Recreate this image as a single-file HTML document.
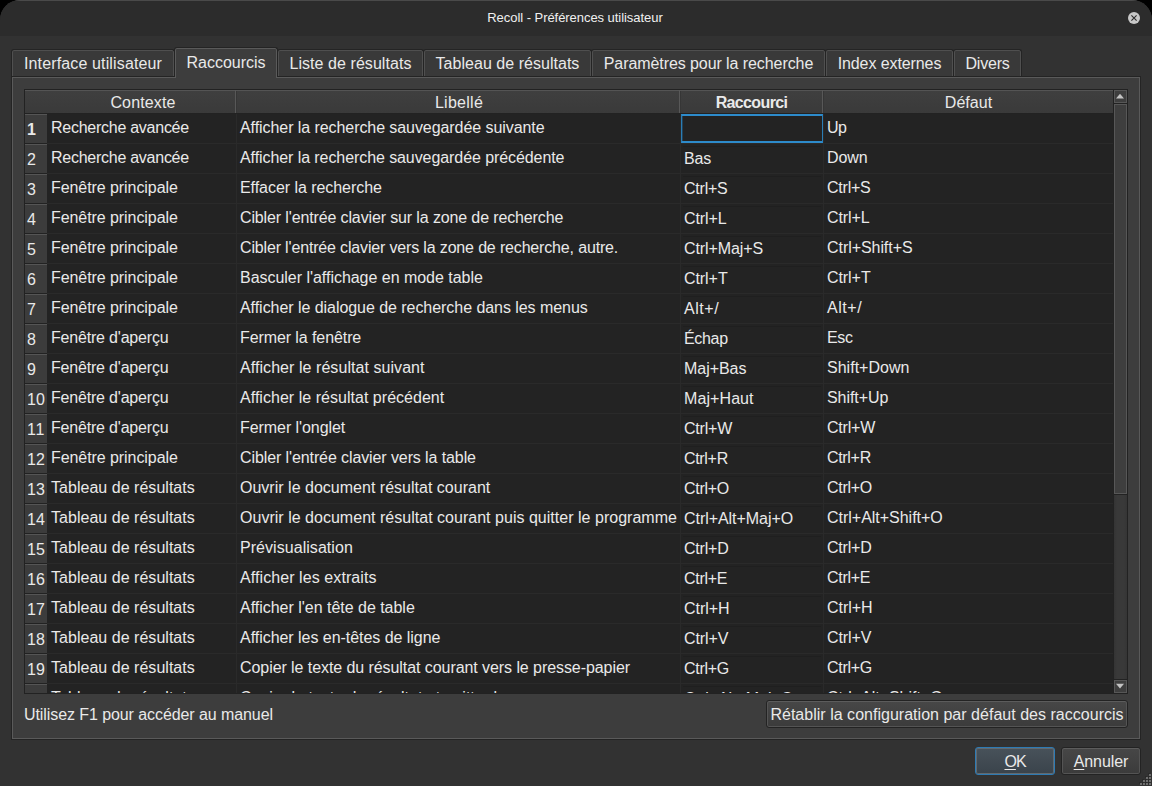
<!DOCTYPE html>
<html lang="fr"><head><meta charset="utf-8"><title>Recoll - Préférences utilisateur</title>
<style>
html,body{margin:0;padding:0;background:#000;}
body{width:1152px;height:786px;overflow:hidden;position:relative;font-family:"Liberation Sans",sans-serif;font-size:16px;color:#e9e9e9;}
*{box-sizing:border-box;}
.abs{position:absolute;white-space:pre;}
.win{position:absolute;left:0;top:0;width:1152px;height:786px;background:#323232;border-radius:20px 20px 0 0;overflow:hidden;}
.titlebar{position:absolute;left:0;top:0;width:1152px;height:36px;background:#2c2c2c;border-top:1px solid #4a4a4a;}
.title{position:absolute;left:-1px;width:1152px;top:9px;height:18px;line-height:18px;font-size:13px;text-align:center;color:#f0f0f0;}
.close{position:absolute;left:1128px;top:12px;width:12px;height:12px;}
.tab{position:absolute;top:49px;height:27px;background:#393939;border:1px solid #242424;border-bottom:none;border-radius:3px 3px 0 0;box-shadow:inset 0 1px 0 #4f4f4f,inset 1px 0 0 #505050,inset -1px 0 0 #505050;text-align:center;line-height:27px;z-index:1;}
.tab.sel{top:47px;height:30px;background:#3d3d3d;box-shadow:inset 0 1px 0 #5a5a5a,inset 1px 0 0 #5a5a5a,inset -1px 0 0 #5a5a5a;line-height:30px;z-index:3;}
.pane{position:absolute;left:11px;top:76px;width:1130px;height:664px;background:#3d3d3d;border:1px solid #242424;box-shadow:inset 0 0 0 1px #5a5a5a;z-index:2;}
.table{position:absolute;left:24px;top:89px;width:1104px;height:605px;background:#232323;border:1px solid #222;overflow:hidden;z-index:4;}
.hdr{position:absolute;left:0;top:0;width:1089px;height:24px;background:linear-gradient(#3f3f3f,#3a3a3a);border-top:1px solid #545454;border-bottom:1px solid #222;}
.hsep{position:absolute;top:0;width:1px;height:23px;background:#585858;}
.hsep::after{content:"";position:absolute;left:1px;top:1px;width:1px;height:22px;background:#363636;}
.ht{position:absolute;top:2px;height:22px;line-height:22px;text-align:center;}
.rh{position:absolute;left:0;width:22px;height:30px;background:#3c3c3c;border-top:1px solid #555;border-bottom:1px solid #222;text-align:left;padding-left:2px;line-height:29px;}
.hl{position:absolute;left:22px;width:1066px;height:1px;background:#2a2a2a;}
.vl{position:absolute;top:24px;width:1px;height:580px;background:#2a2a2a;}
.c{position:absolute;height:30px;line-height:30px;white-space:pre;}
.btn{position:absolute;border:1px solid #232323;border-radius:3px;background:linear-gradient(#474747,#3b3b3b);box-shadow:inset 0 1px 0 #5c5c5c,inset 0 0 0 1px #545454;text-align:center;}
u{text-decoration:underline;text-decoration-thickness:1px;text-underline-offset:2px;}

</style></head><body>
<div class="win">
<div class="titlebar"></div>
<div class="title"><span style="letter-spacing:-0.05px;">Recoll - Préférences utilisateur</span></div>
<svg class="close" viewBox="0 0 12 12"><circle cx="6" cy="6" r="6" fill="#c8c8c8"/><path d="M3.4 3.4 L8.6 8.6 M8.6 3.4 L3.4 8.6" stroke="#2c2c2c" stroke-width="1.1" fill="none"/></svg>
<div class="pane"></div>
<div class="tab" style="left:11px;width:164px;"><span style="letter-spacing:0.14px;">Interface utilisateur</span></div>
<div class="tab sel" style="left:174px;width:104px;"><span style="letter-spacing:-0.02px;">Raccourcis</span></div>
<div class="tab" style="left:277px;width:147px;"><span style="letter-spacing:0.06px;">Liste de résultats</span></div>
<div class="tab" style="left:423px;width:169px;"><span style="letter-spacing:0.03px;">Tableau de résultats</span></div>
<div class="tab" style="left:591px;width:235px;"><span style="letter-spacing:-0.08px;">Paramètres pour la recherche</span></div>
<div class="tab" style="left:825px;width:129px;"><span style="letter-spacing:-0.09px;">Index externes</span></div>
<div class="tab" style="left:953px;width:69px;"><span style="letter-spacing:-0.2px;">Divers</span></div>
<div class="abs" style="left:175px;top:76px;width:102px;height:2px;background:#3d3d3d;border-left:1px solid #5a5a5a;border-right:1px solid #5a5a5a;z-index:3;"></div>
<div class="table">
<div class="hdr"></div>
<div class="hsep" style="left:210px"></div>
<div class="hsep" style="left:654px"></div>
<div class="hsep" style="left:797px"></div>
<div class="ht" style="left:23.5px;width:189px;font-weight:400;"><span style="letter-spacing:0.14px;">Contexte</span></div>
<div class="ht" style="left:212.0px;width:444px;font-weight:400;"><span style="letter-spacing:0.28px;">Libellé</span></div>
<div class="ht" style="left:655px;width:143px;font-weight:700;"><span style="letter-spacing:-0.63px;">Raccourci</span></div>
<div class="ht" style="left:798px;width:291px;font-weight:400;"><span style="letter-spacing:0.02px;">Défaut</span></div>
<div class="vl" style="left:211px"></div>
<div class="vl" style="left:655px"></div>
<div class="vl" style="left:798px"></div>
<div class="hl" style="top:53px"></div>
<div class="rh" style="top:24px;font-weight:700;"><span style="letter-spacing:0.27px;">1</span></div>
<div class="c" style="left:26px;top:23px;letter-spacing:-0.26px;">Recherche avancée</div>
<div class="c" style="left:215px;top:23px;letter-spacing:-0.07px;">Afficher la recherche sauvegardée suivante</div>
<div class="c" style="left:802px;top:23px;letter-spacing:-0.56px;">Up</div>
<div class="hl" style="top:83px"></div>
<div class="rh" style="top:54px;font-weight:400;"><span style="letter-spacing:0.08px;">2</span></div>
<div class="abs" style="left:658px;top:56px;width:138px;height:1px;background:#1f1f1f;"></div>
<div class="c" style="left:26px;top:53px;letter-spacing:-0.26px;">Recherche avancée</div>
<div class="c" style="left:215px;top:53px;letter-spacing:-0.08px;">Afficher la recherche sauvegardée précédente</div>
<div class="c" style="left:659px;top:54px;letter-spacing:-0.22px;">Bas</div>
<div class="c" style="left:802px;top:53px;letter-spacing:-0.12px;">Down</div>
<div class="hl" style="top:113px"></div>
<div class="rh" style="top:84px;font-weight:400;"><span style="letter-spacing:0.08px;">3</span></div>
<div class="abs" style="left:658px;top:86px;width:138px;height:1px;background:#1f1f1f;"></div>
<div class="c" style="left:26px;top:83px;letter-spacing:-0.07px;">Fenêtre principale</div>
<div class="c" style="left:215px;top:83px;letter-spacing:-0.05px;">Effacer la recherche</div>
<div class="c" style="left:659px;top:84px;letter-spacing:-0.23px;">Ctrl+S</div>
<div class="c" style="left:802px;top:83px;letter-spacing:-0.23px;">Ctrl+S</div>
<div class="hl" style="top:143px"></div>
<div class="rh" style="top:114px;font-weight:400;"><span style="letter-spacing:0.08px;">4</span></div>
<div class="abs" style="left:658px;top:116px;width:138px;height:1px;background:#1f1f1f;"></div>
<div class="c" style="left:26px;top:113px;letter-spacing:-0.07px;">Fenêtre principale</div>
<div class="c" style="left:215px;top:113px;letter-spacing:-0.13px;">Cibler l&#x27;entrée clavier sur la zone de recherche</div>
<div class="c" style="left:659px;top:114px;letter-spacing:-0.09px;">Ctrl+L</div>
<div class="c" style="left:802px;top:113px;letter-spacing:-0.09px;">Ctrl+L</div>
<div class="hl" style="top:173px"></div>
<div class="rh" style="top:144px;font-weight:400;"><span style="letter-spacing:0.08px;">5</span></div>
<div class="abs" style="left:658px;top:146px;width:138px;height:1px;background:#1f1f1f;"></div>
<div class="c" style="left:26px;top:143px;letter-spacing:-0.07px;">Fenêtre principale</div>
<div class="c" style="left:215px;top:143px;letter-spacing:-0.16px;">Cibler l&#x27;entrée clavier vers la zone de recherche, autre.</div>
<div class="c" style="left:659px;top:144px;letter-spacing:-0.1px;">Ctrl+Maj+S</div>
<div class="c" style="left:802px;top:143px;letter-spacing:-0.06px;">Ctrl+Shift+S</div>
<div class="hl" style="top:203px"></div>
<div class="rh" style="top:174px;font-weight:400;"><span style="letter-spacing:0.08px;">6</span></div>
<div class="abs" style="left:658px;top:176px;width:138px;height:1px;background:#1f1f1f;"></div>
<div class="c" style="left:26px;top:173px;letter-spacing:-0.07px;">Fenêtre principale</div>
<div class="c" style="left:215px;top:173px;letter-spacing:-0.03px;">Basculer l&#x27;affichage en mode table</div>
<div class="c" style="left:659px;top:174px;letter-spacing:-0.07px;">Ctrl+T</div>
<div class="c" style="left:802px;top:173px;letter-spacing:-0.07px;">Ctrl+T</div>
<div class="hl" style="top:233px"></div>
<div class="rh" style="top:204px;font-weight:400;"><span style="letter-spacing:0.08px;">7</span></div>
<div class="abs" style="left:658px;top:206px;width:138px;height:1px;background:#1f1f1f;"></div>
<div class="c" style="left:26px;top:203px;letter-spacing:-0.07px;">Fenêtre principale</div>
<div class="c" style="left:215px;top:203px;letter-spacing:-0.05px;">Afficher le dialogue de recherche dans les menus</div>
<div class="c" style="left:659px;top:204px;letter-spacing:0.55px;">Alt+/</div>
<div class="c" style="left:802px;top:203px;letter-spacing:0.55px;">Alt+/</div>
<div class="hl" style="top:263px"></div>
<div class="rh" style="top:234px;font-weight:400;"><span style="letter-spacing:0.08px;">8</span></div>
<div class="abs" style="left:658px;top:236px;width:138px;height:1px;background:#1f1f1f;"></div>
<div class="c" style="left:26px;top:233px;letter-spacing:-0.19px;">Fenêtre d&#x27;aperçu</div>
<div class="c" style="left:215px;top:233px;letter-spacing:-0.09px;">Fermer la fenêtre</div>
<div class="c" style="left:659px;top:234px;letter-spacing:-0.32px;">Échap</div>
<div class="c" style="left:802px;top:233px;letter-spacing:-0.32px;">Esc</div>
<div class="hl" style="top:293px"></div>
<div class="rh" style="top:264px;font-weight:400;"><span style="letter-spacing:0.08px;">9</span></div>
<div class="abs" style="left:658px;top:266px;width:138px;height:1px;background:#1f1f1f;"></div>
<div class="c" style="left:26px;top:263px;letter-spacing:-0.19px;">Fenêtre d&#x27;aperçu</div>
<div class="c" style="left:215px;top:263px;letter-spacing:0.06px;">Afficher le résultat suivant</div>
<div class="c" style="left:659px;top:264px;letter-spacing:-0.04px;">Maj+Bas</div>
<div class="c" style="left:802px;top:263px;letter-spacing:0.02px;">Shift+Down</div>
<div class="hl" style="top:323px"></div>
<div class="rh" style="top:294px;font-weight:400;"><span style="letter-spacing:0.08px;">10</span></div>
<div class="abs" style="left:658px;top:296px;width:138px;height:1px;background:#1f1f1f;"></div>
<div class="c" style="left:26px;top:293px;letter-spacing:-0.19px;">Fenêtre d&#x27;aperçu</div>
<div class="c" style="left:215px;top:293px;letter-spacing:0.03px;">Afficher le résultat précédent</div>
<div class="c" style="left:659px;top:294px;letter-spacing:0.09px;">Maj+Haut</div>
<div class="c" style="left:802px;top:293px;letter-spacing:-0.05px;">Shift+Up</div>
<div class="hl" style="top:353px"></div>
<div class="rh" style="top:324px;font-weight:400;"><span style="letter-spacing:0.68px;">11</span></div>
<div class="abs" style="left:658px;top:326px;width:138px;height:1px;background:#1f1f1f;"></div>
<div class="c" style="left:26px;top:323px;letter-spacing:-0.19px;">Fenêtre d&#x27;aperçu</div>
<div class="c" style="left:215px;top:323px;letter-spacing:-0.07px;">Fermer l&#x27;onglet</div>
<div class="c" style="left:659px;top:324px;letter-spacing:-0.19px;">Ctrl+W</div>
<div class="c" style="left:802px;top:323px;letter-spacing:-0.19px;">Ctrl+W</div>
<div class="hl" style="top:383px"></div>
<div class="rh" style="top:354px;font-weight:400;"><span style="letter-spacing:0.08px;">12</span></div>
<div class="abs" style="left:658px;top:356px;width:138px;height:1px;background:#1f1f1f;"></div>
<div class="c" style="left:26px;top:353px;letter-spacing:-0.07px;">Fenêtre principale</div>
<div class="c" style="left:215px;top:353px;letter-spacing:-0.1px;">Cibler l&#x27;entrée clavier vers la table</div>
<div class="c" style="left:659px;top:354px;letter-spacing:-0.32px;">Ctrl+R</div>
<div class="c" style="left:802px;top:353px;letter-spacing:-0.32px;">Ctrl+R</div>
<div class="hl" style="top:413px"></div>
<div class="rh" style="top:384px;font-weight:400;"><span style="letter-spacing:0.08px;">13</span></div>
<div class="abs" style="left:658px;top:386px;width:138px;height:1px;background:#1f1f1f;"></div>
<div class="c" style="left:26px;top:383px;letter-spacing:0.03px;">Tableau de résultats</div>
<div class="c" style="left:215px;top:383px;letter-spacing:0.01px;">Ouvrir le document résultat courant</div>
<div class="c" style="left:659px;top:384px;letter-spacing:-0.28px;">Ctrl+O</div>
<div class="c" style="left:802px;top:383px;letter-spacing:-0.28px;">Ctrl+O</div>
<div class="hl" style="top:443px"></div>
<div class="rh" style="top:414px;font-weight:400;"><span style="letter-spacing:0.08px;">14</span></div>
<div class="abs" style="left:658px;top:416px;width:138px;height:1px;background:#1f1f1f;"></div>
<div class="c" style="left:26px;top:413px;letter-spacing:0.03px;">Tableau de résultats</div>
<div class="c" style="left:215px;top:413px;letter-spacing:0.02px;">Ouvrir le document résultat courant puis quitter le programme</div>
<div class="c" style="left:659px;top:414px;letter-spacing:-0.05px;">Ctrl+Alt+Maj+O</div>
<div class="c" style="left:802px;top:413px;letter-spacing:-0.02px;">Ctrl+Alt+Shift+O</div>
<div class="hl" style="top:473px"></div>
<div class="rh" style="top:444px;font-weight:400;"><span style="letter-spacing:0.08px;">15</span></div>
<div class="abs" style="left:658px;top:446px;width:138px;height:1px;background:#1f1f1f;"></div>
<div class="c" style="left:26px;top:443px;letter-spacing:0.03px;">Tableau de résultats</div>
<div class="c" style="left:215px;top:443px;letter-spacing:0.05px;">Prévisualisation</div>
<div class="c" style="left:659px;top:444px;letter-spacing:-0.21px;">Ctrl+D</div>
<div class="c" style="left:802px;top:443px;letter-spacing:-0.21px;">Ctrl+D</div>
<div class="hl" style="top:503px"></div>
<div class="rh" style="top:474px;font-weight:400;"><span style="letter-spacing:0.08px;">16</span></div>
<div class="abs" style="left:658px;top:476px;width:138px;height:1px;background:#1f1f1f;"></div>
<div class="c" style="left:26px;top:473px;letter-spacing:0.03px;">Tableau de résultats</div>
<div class="c" style="left:215px;top:473px;letter-spacing:0.08px;">Afficher les extraits</div>
<div class="c" style="left:659px;top:474px;letter-spacing:-0.3px;">Ctrl+E</div>
<div class="c" style="left:802px;top:473px;letter-spacing:-0.3px;">Ctrl+E</div>
<div class="hl" style="top:533px"></div>
<div class="rh" style="top:504px;font-weight:400;"><span style="letter-spacing:0.08px;">17</span></div>
<div class="abs" style="left:658px;top:506px;width:138px;height:1px;background:#1f1f1f;"></div>
<div class="c" style="left:26px;top:503px;letter-spacing:0.03px;">Tableau de résultats</div>
<div class="c" style="left:215px;top:503px;letter-spacing:-0.02px;">Afficher l&#x27;en tête de table</div>
<div class="c" style="left:659px;top:504px;letter-spacing:-0.06px;">Ctrl+H</div>
<div class="c" style="left:802px;top:503px;letter-spacing:-0.06px;">Ctrl+H</div>
<div class="hl" style="top:563px"></div>
<div class="rh" style="top:534px;font-weight:400;"><span style="letter-spacing:0.08px;">18</span></div>
<div class="abs" style="left:658px;top:536px;width:138px;height:1px;background:#1f1f1f;"></div>
<div class="c" style="left:26px;top:533px;letter-spacing:0.03px;">Tableau de résultats</div>
<div class="c" style="left:215px;top:533px;letter-spacing:-0.04px;">Afficher les en-têtes de ligne</div>
<div class="c" style="left:659px;top:534px;letter-spacing:-0.12px;">Ctrl+V</div>
<div class="c" style="left:802px;top:533px;letter-spacing:-0.12px;">Ctrl+V</div>
<div class="hl" style="top:593px"></div>
<div class="rh" style="top:564px;font-weight:400;"><span style="letter-spacing:0.08px;">19</span></div>
<div class="abs" style="left:658px;top:566px;width:138px;height:1px;background:#1f1f1f;"></div>
<div class="c" style="left:26px;top:563px;letter-spacing:0.03px;">Tableau de résultats</div>
<div class="c" style="left:215px;top:563px;letter-spacing:-0.07px;">Copier le texte du résultat courant vers le presse-papier</div>
<div class="c" style="left:659px;top:564px;letter-spacing:-0.3px;">Ctrl+G</div>
<div class="c" style="left:802px;top:563px;letter-spacing:-0.3px;">Ctrl+G</div>
<div class="hl" style="top:623px"></div>
<div class="rh" style="top:594px;font-weight:400;"><span style="letter-spacing:0.08px;">20</span></div>
<div class="abs" style="left:658px;top:596px;width:138px;height:1px;background:#1f1f1f;"></div>
<div class="c" style="left:26px;top:593px;letter-spacing:0.03px;">Tableau de résultats</div>
<div class="c" style="left:215px;top:593px;">Copier le texte du résultat et quitter le programme</div>
<div class="c" style="left:659px;top:594px;letter-spacing:-0.05px;">Ctrl+Alt+Maj+G</div>
<div class="c" style="left:802px;top:593px;letter-spacing:-0.03px;">Ctrl+Alt+Shift+G</div>
<div class="abs" style="left:656px;top:24px;width:142px;height:29px;border:solid #2d8bcb;border-width:2px 1px;border-left-color:#2a7db6;border-right-color:#2a7db6;box-shadow:inset 1px 0 0 #244258;background:#232323;"></div>
<div class="abs" style="left:1088px;top:0;width:14px;height:604px;background:#222;"></div>
<div class="abs" style="left:1089px;top:0;width:13px;height:13px;background:#3e3e3e;border:1px solid #575757;"></div>
<svg class="abs" style="left:1091px;top:3px" width="8" height="6" viewBox="0 0 8 6"><path d="M0 5.4 L4 0.8 L8 5.4 Z" fill="#c4c4c4"/></svg>
<div class="abs" style="left:1089px;top:14px;width:13px;height:390px;background:#3e3e3e;border:1px solid #575757;"></div>
<div class="abs" style="left:1089px;top:405px;width:13px;height:184px;background:linear-gradient(90deg,#343434,#393939 3px,#393939 10px,#353535);"></div>
<div class="abs" style="left:1089px;top:590px;width:13px;height:13px;background:#3e3e3e;border:1px solid #575757;"></div>
<svg class="abs" style="left:1091px;top:593px" width="8" height="6" viewBox="0 0 8 6"><path d="M0 0.8 L4 5.4 L8 0.8 Z" fill="#c4c4c4"/></svg>
</div>
<div class="abs" style="left:24px;top:700px;height:30px;line-height:30px;z-index:4;letter-spacing:-0.08px;">Utilisez F1 pour accéder au manuel</div>
<div class="btn" style="left:766px;top:700px;width:362px;height:28px;line-height:27px;z-index:4;"><span style="letter-spacing:0.02px;">Rétablir la configuration par défaut des raccourcis</span></div>
<div class="btn" style="left:975px;top:747px;width:80px;height:28px;line-height:27px;border-color:#2e7bb4;background:linear-gradient(#48525a,#3a434b);box-shadow:inset 0 0 0 1px #626a70;"><span style="letter-spacing:-1.05px;"><u>O</u>K</span></div>
<div class="btn" style="left:1061px;top:747px;width:80px;height:28px;line-height:27px;"><span style="letter-spacing:-0.07px;"><u>A</u>nnuler</span></div>
<svg class="abs" style="left:0;top:0" width="1152" height="786"><rect x="1148" y="773" width="2" height="2" fill="#2a2a2a"/><rect x="1149" y="774" width="2" height="2" fill="#6e6e6e"/><rect x="1145" y="776" width="2" height="2" fill="#2a2a2a"/><rect x="1146" y="777" width="2" height="2" fill="#6e6e6e"/><rect x="1148" y="776" width="2" height="2" fill="#2a2a2a"/><rect x="1149" y="777" width="2" height="2" fill="#6e6e6e"/><rect x="1142" y="779" width="2" height="2" fill="#2a2a2a"/><rect x="1143" y="780" width="2" height="2" fill="#6e6e6e"/><rect x="1145" y="779" width="2" height="2" fill="#2a2a2a"/><rect x="1146" y="780" width="2" height="2" fill="#6e6e6e"/><rect x="1148" y="779" width="2" height="2" fill="#2a2a2a"/><rect x="1149" y="780" width="2" height="2" fill="#6e6e6e"/><rect x="1139" y="782" width="2" height="2" fill="#2a2a2a"/><rect x="1140" y="783" width="2" height="2" fill="#6e6e6e"/><rect x="1142" y="782" width="2" height="2" fill="#2a2a2a"/><rect x="1143" y="783" width="2" height="2" fill="#6e6e6e"/><rect x="1145" y="782" width="2" height="2" fill="#2a2a2a"/><rect x="1146" y="783" width="2" height="2" fill="#6e6e6e"/><rect x="1148" y="782" width="2" height="2" fill="#2a2a2a"/><rect x="1149" y="783" width="2" height="2" fill="#6e6e6e"/></svg>
</div>
</body></html>
